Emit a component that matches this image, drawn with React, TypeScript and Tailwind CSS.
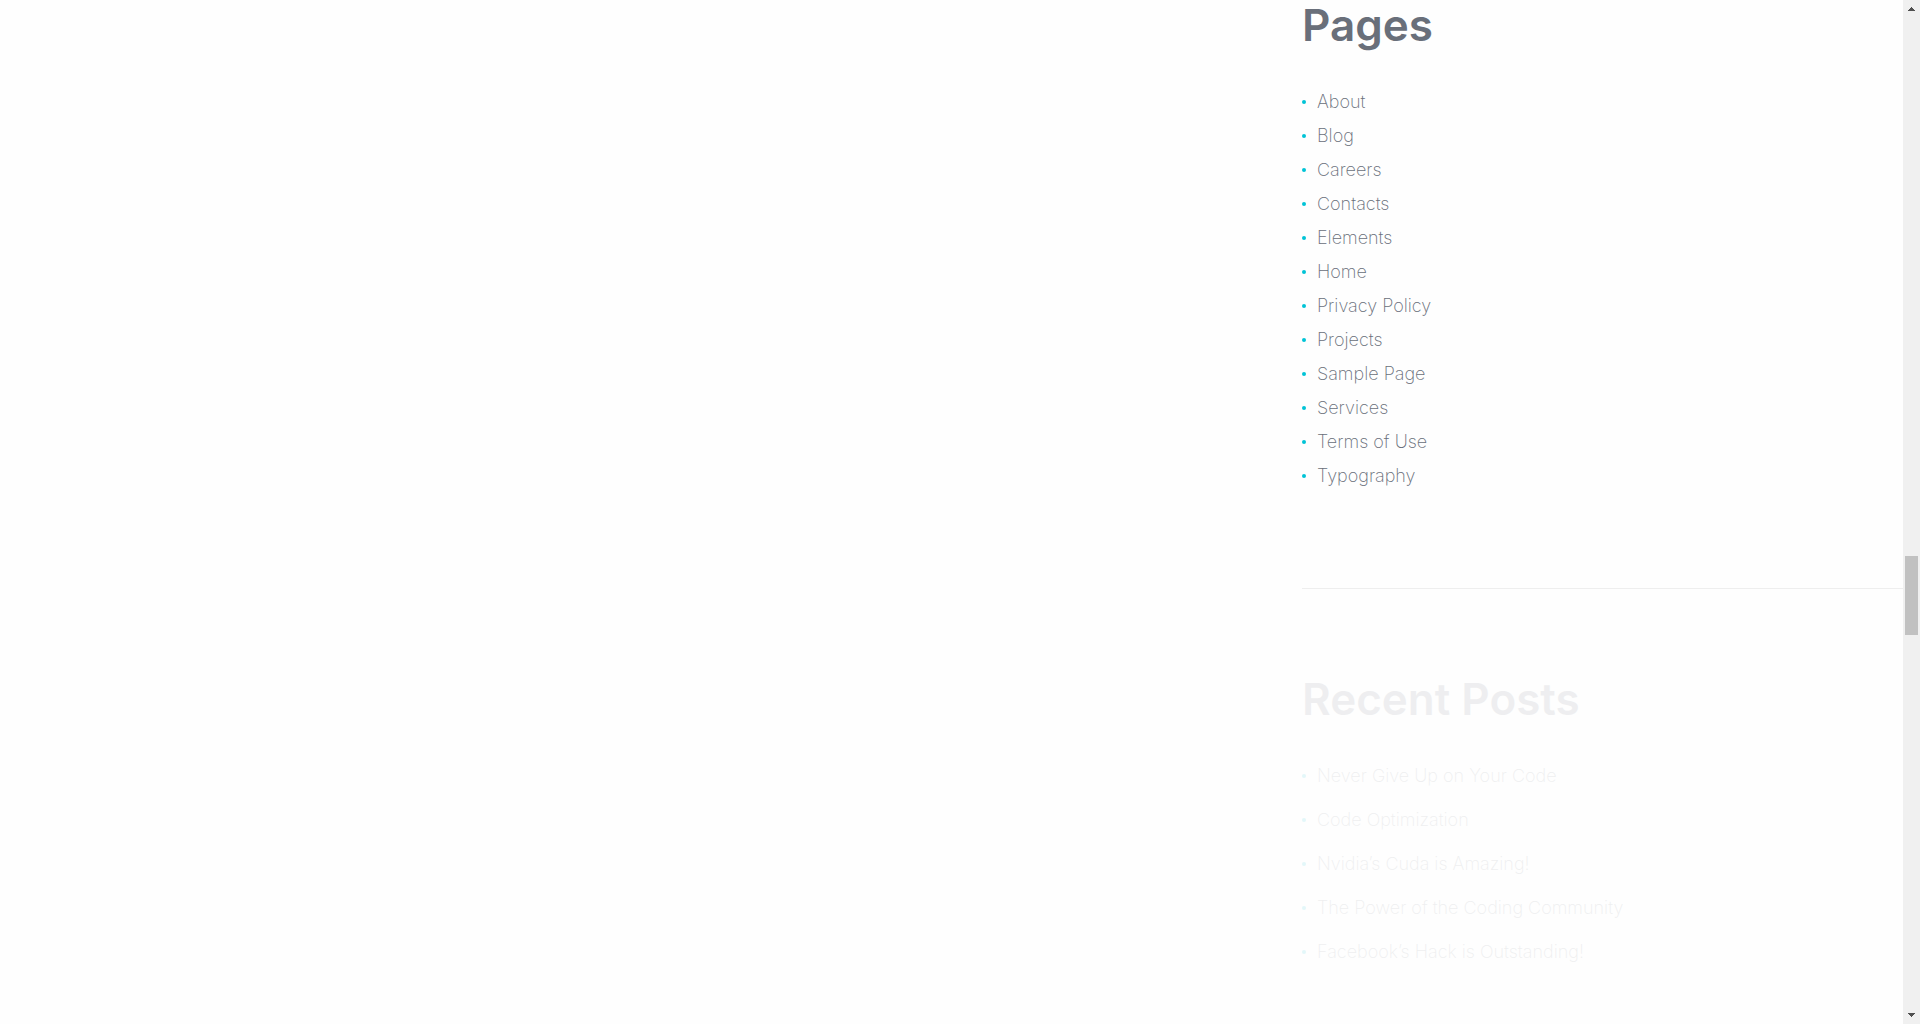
const pages = [
  'About',
  'Blog',
  'Careers',
  'Contacts',
  'Elements',
  'Home',
  'Privacy Policy',
  'Projects',
  'Sample Page',
  'Services',
  'Terms of Use',
  'Typography',
];

const posts = [
  'Never Give Up on Your Code',
  'Code Optimization',
  'Nvidia’s Cuda is Amazing!',
  'The Power of the Coding Community',
  'Facebook’s Hack is Outstanding!',
];

function LinkItem({ label }: { label: string }) {
  return (
    <li className="flex h-[34px] items-center gap-[11px]">
      <span className="size-1 shrink-0 rounded-full bg-[#00c3d6]" aria-hidden="true" />
      <a href="#" className="whitespace-nowrap">
        {label}
      </a>
    </li>
  );
}

function Scrollbar() {
  return (
    <div
      className="flex h-screen w-[17px] shrink-0 flex-col items-center bg-[#f0f0f0]"
      aria-hidden="true"
    >
      <svg className="h-[17px] w-[17px]" viewBox="0 0 17 17" fill="#505050" shapeRendering="crispEdges">
        <path d="M8 7h1v1h1v1h1v1h1v1H5v-1h1V9h1V8h1z" />
      </svg>
      <div className="flex w-full grow flex-col items-center">
        <div className="grow-[539]" />
        <div className="h-[79px] w-[13px] bg-[#c1c1c1]" />
        <div className="grow-[372]" />
      </div>
      <svg className="h-[17px] w-[17px]" viewBox="0 0 17 17" fill="#505050" shapeRendering="crispEdges">
        <path d="M5 6h7v1h-1v1h-1v1H9v1H8V9H7V8H6V7H5z" />
      </svg>
    </div>
  );
}

export default function App() {
  return (
    <div className="flex h-screen overflow-hidden bg-[#fefefe] font-['Inter',sans-serif] text-[18px] leading-6 font-extralight text-[#696f7a]">
      <main className="flex min-w-0 grow justify-end">
        <aside className="w-[601px]">
          <section className="border-b border-[#eeeeee] pb-[95px]">
            <h2 className="text-[44px] leading-[50px] font-semibold">Pages</h2>
            <ul className="mt-[35px]">
              {pages.map((page) => (
                <LinkItem key={page} label={page} />
              ))}
            </ul>
          </section>
          <section className="pt-[85px] opacity-10">
            <h2 className="text-[44px] leading-[50px] font-semibold">Recent Posts</h2>
            <ul className="mt-[35px] flex flex-col gap-[10px]">
              {posts.map((post) => (
                <LinkItem key={post} label={post} />
              ))}
            </ul>
          </section>
        </aside>
      </main>
      <Scrollbar />
    </div>
  );
}
